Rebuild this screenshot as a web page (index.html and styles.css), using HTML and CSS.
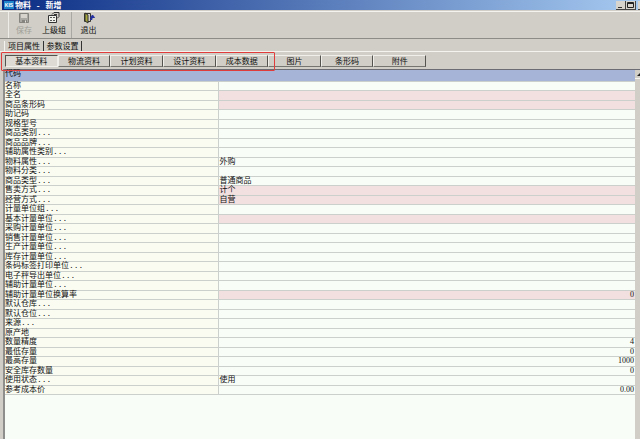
FILE: index.html
```
<!DOCTYPE html>
<html lang="zh-CN">
<head>
  <meta charset="UTF-8">
  <title>物料 - 新增</title>
  <link rel="stylesheet" href="styles.css">
</head>
<body>

  <!-- Title bar -->
  <header class="titlebar">
    <span class="logo">KIS</span>
    <h1>物料 - 新增</h1>
    <div class="window-buttons">
      <button aria-label="最小化"><svg width="9" height="8" viewBox="0 0 9 8"><path d="M2 6.500h4" stroke="#333"/></svg></button>
      <button aria-label="最大化"><svg width="9" height="8" viewBox="0 0 9 8"><path d="M1.500 1.500h6v5h-6zM1 2.500h7" fill="none" stroke="#222"/></svg></button>
      <button aria-label="关闭"></button>
    </div>
  </header>

  <!-- Toolbar -->
  <div class="toolbar">
    <button class="tool" disabled>
      <svg width="12" height="12" viewBox="0 0 12 12">
        <path d="M1.500 1.500h9v9h-9z" fill="#aaa9a3" stroke="#85847e"/>
        <path d="M3 2h6v4H3z" fill="#d6d4cc"/>
        <path d="M4 8h5v3H4z" fill="#85847e"/>
        <path d="M7 8.500h1v2H7z" fill="#e6e4dc"/>
      </svg>
      <span>保存</span>
    </button>
    <button class="tool">
      <svg width="12" height="12" viewBox="0 0 12 12">
        <path d="M.5 3.500h8v7h-8z" fill="#f2f2ec" stroke="#333"/>
        <path d="M2 5.500h2M5 5.500h2M2 8.500h2M5 8.500h2" stroke="#555"/>
        <path d="M4 2.500L6 .5h5v4L9 6.500M6 2.500h3" fill="none" stroke="#333"/>
      </svg>
      <span>上级组</span>
    </button>
    <button class="tool tool-exit">
      <svg width="12" height="12" viewBox="0 0 12 12">
        <path d="M1.500 1.500h6v8h-6z" fill="#d0cec6" stroke="#333"/>
        <path d="M2 1l3 2v8L2 9z" fill="#a8a83c" stroke="#333"/>
        <path d="M7 7.500h2V5M7.500 5.500L9.500 3l2 2.500z" fill="#2430a0" stroke="#2430a0"/>
      </svg>
      <span>退出</span>
    </button>
  </div>

  <!-- Main tabs -->
  <nav class="tabs">
    <button class="tab active">项目属性</button>
    <button class="tab">参数设置</button>
  </nav>

  <main class="page">
    <nav class="subtabs">
      <button class="active">基本资料</button>
      <button>物流资料</button>
      <button>计划资料</button>
      <button>设计资料</button>
      <button>成本数据</button>
      <button>图片</button>
      <button>条形码</button>
      <button>附件</button>
    </nav>
    <div class="highlight"></div>

    <div class="grid">
      <table>
        <colgroup>
          <col class="col-name">
          <col>
        </colgroup>
        <thead>
          <tr><th>代码</th><td></td></tr>
        </thead>
        <tbody>
          <tr><th>名称</th><td></td></tr>
          <tr class="required"><th>全名</th><td></td></tr>
          <tr class="required"><th>商品条形码</th><td></td></tr>
          <tr><th>助记码</th><td></td></tr>
          <tr><th>规格型号</th><td></td></tr>
          <tr><th>商品类别...</th><td></td></tr>
          <tr><th>商品品牌...</th><td></td></tr>
          <tr><th>辅助属性类别...</th><td></td></tr>
          <tr><th>物料属性...</th><td>外购</td></tr>
          <tr><th>物料分类...</th><td></td></tr>
          <tr><th>商品类型...</th><td>普通商品</td></tr>
          <tr class="required"><th>售卖方式...</th><td>计个</td></tr>
          <tr class="required"><th>经营方式...</th><td>自营</td></tr>
          <tr><th>计量单位组...</th><td></td></tr>
          <tr class="required"><th>基本计量单位...</th><td></td></tr>
          <tr><th>采购计量单位...</th><td></td></tr>
          <tr><th>销售计量单位...</th><td></td></tr>
          <tr><th>生产计量单位...</th><td></td></tr>
          <tr><th>库存计量单位...</th><td></td></tr>
          <tr><th>条码标签打印单位...</th><td></td></tr>
          <tr><th>电子秤导出单位...</th><td></td></tr>
          <tr><th>辅助计量单位...</th><td></td></tr>
          <tr class="required"><th>辅助计量单位换算率</th><td class="num">0</td></tr>
          <tr><th>默认仓库...</th><td></td></tr>
          <tr><th>默认仓位...</th><td></td></tr>
          <tr><th>来源...</th><td></td></tr>
          <tr><th>原产地</th><td></td></tr>
          <tr><th>数量精度</th><td class="num">4</td></tr>
          <tr><th>最低存量</th><td class="num">0</td></tr>
          <tr><th>最高存量</th><td class="num">1000</td></tr>
          <tr><th>安全库存数量</th><td class="num">0</td></tr>
          <tr><th>使用状态...</th><td>使用</td></tr>
          <tr><th>参考成本价</th><td class="num">0.00</td></tr>
        </tbody>
      </table>
      <div class="scrollbar"><button aria-label="向上滚动"></button></div>
    </div>
  </main>

</body>
</html>
```
FILE: styles.css
```
* {
  box-sizing: border-box;
}

body {
  margin: 0;
  min-height: 100vh;
  display: flex;
  flex-direction: column;
  overflow: hidden;
  background: #d0cec6;
  color: #111;
  font: 8px/9px "Liberation Mono", "Noto Sans CJK SC", monospace;
}

button {
  margin: 0;
  padding: 0;
  border: none;
  background: none;
  color: inherit;
  font: inherit;
}

/* title bar */
.titlebar {
  display: flex;
  align-items: center;
  height: 10px;
  margin-left: 2px;
  padding-left: 2px;
  background: linear-gradient(to right, #0a2c84, #a6caf0);
  color: #fff;
}

.titlebar h1 {
  flex: 1;
  margin: 0 0 0 1px;
  font-size: 8px;
}

.logo {
  width: 10px;
  height: 8px;
  background: #1f86cc;
  font: bold 5px/8px "Liberation Sans", sans-serif;
  text-align: center;
}

.window-buttons {
  display: flex;
  width: 24px;
  height: 9px;
  overflow: hidden;
}

.window-buttons button {
  flex: none;
  display: flex;
  width: 10px;
  background: #d6d4cc;
  border-right: 1px solid #444;
  border-bottom: 1px solid #444;
}

.window-buttons button:last-child {
  margin-left: 2px;
}

/* toolbar */
.toolbar {
  display: flex;
  height: 28px;
  margin-top: 1px;
  padding-left: 8px;
  border-top: 1px solid #f4f3ee;
  border-bottom: 1px solid #8e8c86;
}

.toolbar::before {
  content: "";
  width: 1px;
  margin-right: 2px;
  background: #eeede8;
}

.tool {
  display: flex;
  flex-direction: column;
  align-items: center;
  gap: 2px;
  width: 26px;
  margin-right: 4px;
}

.tool:disabled {
  color: #a09e98;
}

.tool-exit {
  width: 34px;
  border-left: 1px solid #aaa8a2;
}

/* main tabs */
.tabs {
  display: flex;
  height: 12px;
  padding: 2px 0 0 4px;
}

.tab {
  width: 38px;
  border-right: 1px solid #333;
}

.tab.active {
  width: 40px;
  border-left: 1px solid #f4f3ee;
}

/* page */
.page {
  position: relative;
  flex: 1;
  display: flex;
  flex-direction: column;
  border-top: 1px solid #f4f3ee;
}

.subtabs {
  display: grid;
  grid-template-columns: repeat(8, 1fr);
  max-width: 421px;
  height: 12px;
  margin: 3px 0 2px 5px;
}

.subtabs button {
  border: 1px solid;
  border-color: #f0efea #55534e #77756f #f0efea;
}

.subtabs .active {
  background: #dddbd4;
  border-color: #55534e #f0efea #f0efea #55534e;
}

/* red frame over the first five sub tabs */
.highlight {
  position: absolute;
  top: 0;
  left: 1px;
  width: 274px;
  height: 19px;
  border: 1px solid #e03c3c;
  border-radius: 1px;
}

/* property grid */
.grid {
  flex: 1;
  display: flex;
  align-items: stretch;
  margin-left: 3px;
  border-top: 1px solid #6c6c74;
  border-left: 2px solid #8e8e8c;
  background: #f8fdf8;
}

table {
  flex: 1;
  align-self: flex-start;
  border-collapse: collapse;
  table-layout: fixed;
}

.col-name {
  width: 213px;
}

tr {
  height: 9px;
}

tbody tr:nth-child(even) {
  height: 10px;
}

th,
td {
  padding: 0 0 0 1px;
  border-bottom: 1px solid #ccd0cc;
  line-height: 8px;
  font-weight: normal;
  text-align: left;
  white-space: nowrap;
}

th {
  padding: 0;
}

tbody th {
  border-right: 1px solid #ccd0cc;
  background: #fafcf2;
}

thead tr {
  height: 11px;
  background: #a6b4d8;
}

thead th {
  vertical-align: top;
}

.required td {
  background: #f2dfe0;
}

.num {
  padding-right: 1px;
  font-family: "Liberation Serif", serif;
  text-align: right;
}

.scrollbar {
  width: 5px;
  background: #d0cec6;
}

.scrollbar button {
  display: flex;
  width: 5px;
  height: 9px;
  border-bottom: 1px solid #f4f3ee;
}

.scrollbar button::before {
  content: "";
  margin: 3px 0 0 2px;
  border: 3px solid transparent;
  border-top: none;
  border-bottom-color: #222;
  height: 0;
}
```
